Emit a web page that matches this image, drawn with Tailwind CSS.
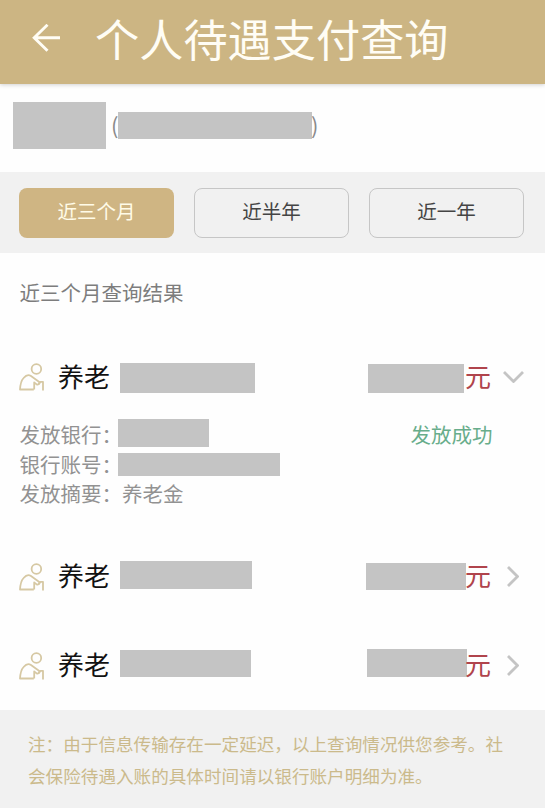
<!DOCTYPE html>
<html lang="zh-CN">
<head>
  <meta charset="UTF-8" />
  <meta name="viewport" content="width=device-width, initial-scale=1.0" />
  <title>个人待遇支付查询</title>
  <script src="https://cdn.jsdelivr.net/npm/@tailwindcss/browser@4"></script>
</head>
<body class="bg-[#fefefe] font-['Noto_Sans_CJK_SC',sans-serif] overflow-hidden">
  <svg class="hidden">
    <symbol id="elder" viewBox="0 0 26 28">
      <g fill="none" stroke="#d6c8a3" stroke-width="1.8" stroke-linejoin="round">
        <circle cx="17.4" cy="6" r="4.8" />
        <path d="M14.8 26.5H1C1.3 21.5 2.2 17.5 4.6 15C6.6 12.6 9.6 11.4 12 13L20.6 19.2C20.4 21.4 19 22 17.6 21.4L15.2 19.4V26.5" />
        <path d="M19.5 21.2L21.5 18.8H24V27.5" />
      </g>
    </symbol>
  </svg>

  <div class="flex h-[808px] w-[545px] flex-col">
    <!-- Header -->
    <header class="z-10 flex h-[84px] shrink-0 items-center bg-[#ccb583] pb-[9px] pl-8 shadow-[0_1px_4px_rgba(0,0,0,0.18)]">
      <svg class="h-7 w-7 shrink-0" viewBox="0 0 28 28" fill="none" stroke="#fffdf5" stroke-width="2.9">
        <path d="M28 13.8H2M15.5 0.8L2.2 13.8L15.5 26.8" />
      </svg>
      <h1 class="ml-[35px] text-[44.2px] leading-[60px] text-[#fffdf5]">个人待遇支付查询</h1>
    </header>

    <!-- Name and ID number -->
    <section class="flex h-[88px] shrink-0 items-center pb-[5px] pl-[13px] text-xl text-[#8a8a8a]">
      <span class="h-[47px] w-[93px] bg-[#c4c4c4]"></span>
      <span class="mb-1 ml-[5px] w-[7px] text-[22px] leading-none">(</span>
      <span class="h-[27px] w-[194px] bg-[#c4c4c4]"></span>
      <span class="-ml-px mb-1 text-[22px] leading-none">)</span>
    </section>

    <!-- Period tabs -->
    <nav class="grid h-[81px] shrink-0 grid-cols-3 gap-5 bg-[#f1f1f1] pl-[19px] pr-[21px] pt-4 text-[19.5px] text-[#444]">
      <button class="h-[50px] rounded-lg bg-[#cfb583] pb-1 text-[#fffbe8]">近三个月</button>
      <button class="h-[50px] rounded-lg border border-[#c6c6c6] pb-1">近半年</button>
      <button class="h-[50px] rounded-lg border border-[#c6c6c6] pb-1">近一年</button>
    </nav>

    <main class="h-[457px] shrink-0">
      <h2 class="h-[79px] pl-[19.5px] pt-6 text-[20.5px] leading-[30px] text-[#7d7d7d]">近三个月查询结果</h2>

      <div class="flex h-[90px] items-center pl-[19px]">
        <svg class="h-7 w-[26px]"><use href="#elder" /></svg>
        <span class="mb-1 ml-[13px] w-[62px] text-[26px] text-[#111]">养老</span>
        <span class="mt-0.5 h-[30px] w-[135px] bg-[#c4c4c4]"></span>
        <span class="ml-[113px] mt-0.5 h-[29px] w-24 bg-[#c4c4c4]"></span>
        <span class="mb-1 ml-px text-[26px] text-[#b0444c]">元</span>
        <svg class="ml-3 h-3 w-[21px]" viewBox="0 0 21 12" fill="none" stroke="#c4c4c4" stroke-width="2.8"><path d="M1 1L10.5 10.5L20 1" /></svg>
      </div>

      <!-- Payment details -->
      <div class="-mt-0.5 flex h-[112px] justify-between pl-[19.5px] pr-[52.5px] text-[20.5px] leading-[29px] text-[#929292]">
        <div>
          <div class="flex h-[29px] items-center">
            <span class="w-[98.5px] whitespace-nowrap">发放银行：</span>
            <span class="mb-1 h-7 w-[91px] bg-[#c4c4c4]"></span>
          </div>
          <div class="flex h-[30px] items-center">
            <span class="w-[98.5px] whitespace-nowrap">银行账号：</span>
            <span class="h-[23px] w-[162px] bg-[#c4c4c4]"></span>
          </div>
          <div>发放摘要：养老金</div>
        </div>
        <span class="text-[#68ad8b]">发放成功</span>
      </div>

      <div class="flex h-[89px] items-center pl-[19px]">
        <svg class="h-7 w-[26px]"><use href="#elder" /></svg>
        <span class="mb-1 ml-[13px] w-[62px] text-[26px] text-[#111]">养老</span>
        <span class="mb-[3px] h-7 w-[132px] bg-[#c4c4c4]"></span>
        <span class="ml-[114px] h-[27px] w-[100px] bg-[#c4c4c4]"></span>
        <span class="-ml-px mb-1 text-[26px] text-[#b0444c]">元</span>
        <svg class="ml-4 h-[21px] w-3" viewBox="0 0 12 21" fill="none" stroke="#c4c4c4" stroke-width="2.8"><path d="M1 1L10.5 10.5L1 20" /></svg>
      </div>

      <div class="flex h-[89px] items-center pl-[19px]">
        <svg class="h-7 w-[26px]"><use href="#elder" /></svg>
        <span class="mb-1 ml-[13px] w-[62px] text-[26px] text-[#111]">养老</span>
        <span class="mb-1 h-[27px] w-[131px] bg-[#c4c4c4]"></span>
        <span class="mb-1.5 ml-[116px] h-7 w-[100px] bg-[#c4c4c4]"></span>
        <span class="-ml-0.5 mb-1 text-[26px] text-[#b0444c]">元</span>
        <svg class="ml-4 h-[21px] w-3" viewBox="0 0 12 21" fill="none" stroke="#c4c4c4" stroke-width="2.8"><path d="M1 1L10.5 10.5L1 20" /></svg>
      </div>
    </main>

    <footer class="grow bg-[#f1f1f1] pl-7 pt-[18px] text-[17.6px] leading-8 text-[#cbba8b]">
      <p class="whitespace-nowrap">注：由于信息传输存在一定延迟，以上查询情况供您参考。社<br />会保险待遇入账的具体时间请以银行账户明细为准。</p>
    </footer>
  </div>
</body>
</html>
